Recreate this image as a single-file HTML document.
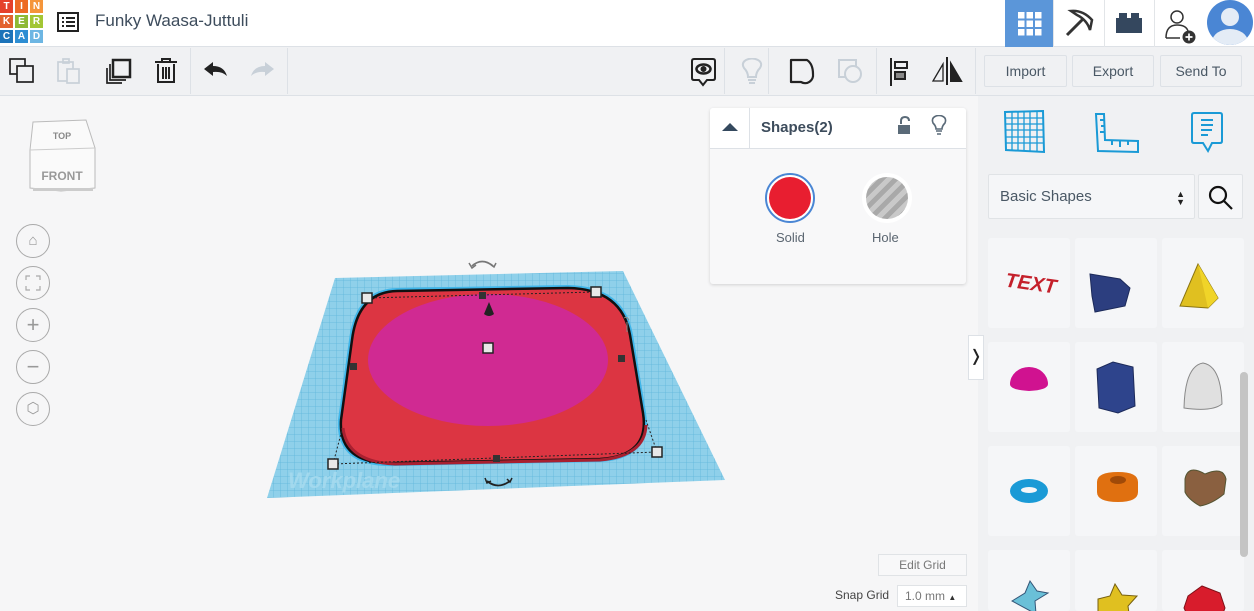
<!DOCTYPE html>
<html><head><meta charset="utf-8"><style>
*{box-sizing:border-box;margin:0;padding:0}
body{width:1254px;height:611px;overflow:hidden;background:#f6f6f7;font-family:"Liberation Sans",sans-serif;position:relative;color:#34495e}
.abs{position:absolute}
#top{left:0;top:0;width:1254px;height:47px;background:#fff;border-bottom:1px solid #dde1e6}
#tb{left:0;top:47px;width:1254px;height:49px;background:#f0f1f3;border-bottom:1px solid #dde1e6}
.logo div{position:absolute;width:13px;height:13px;color:#fff;font-size:10px;font-weight:bold;text-align:center;line-height:13px}
.btn{position:absolute;top:55px;height:32px;border:1px solid #dde1e6;border-radius:2px;background:#f0f1f3;font-size:14px;color:#4a5865;text-align:center;line-height:30px}
.sep{position:absolute;top:48px;width:1px;height:46px;background:#dde1e6}
.tile{position:absolute;width:82px;height:90px;background:#f5f6f8;border-radius:3px}
.nav{position:absolute;left:16px;width:34px;height:34px;border:1px solid #aaa;border-radius:50%;color:#999;text-align:center;line-height:31px;font-size:22px}
</style></head><body>
<div id="top" class="abs"></div>
<div class="abs logo" style="left:0;top:0;width:44px;height:44px">
<div style="left:0;top:0;background:#e5412b">T</div><div style="left:15px;top:0;background:#ed6b25">I</div><div style="left:30px;top:0;background:#f5953a">N</div>
<div style="left:0;top:15px;background:#e3632e">K</div><div style="left:15px;top:15px;background:#8fb935">E</div><div style="left:30px;top:15px;background:#a3c634">R</div>
<div style="left:0;top:30px;background:#1c73b9">C</div><div style="left:15px;top:30px;background:#2e8ed3">A</div><div style="left:30px;top:30px;background:#6db6e3">D</div>
</div>
<svg class="abs" style="left:57px;top:12px" width="22" height="20"><rect x="1" y="1" width="20" height="18" fill="none" stroke="#222" stroke-width="2"/><g fill="#222"><rect x="5" y="5" width="2" height="2"/><rect x="5" y="9" width="2" height="2"/><rect x="5" y="13" width="2" height="2"/><rect x="9" y="5" width="9" height="2"/><rect x="9" y="9" width="9" height="2"/><rect x="9" y="13" width="9" height="2"/></g></svg>
<div class="abs" style="left:95px;top:11px;font-size:17px;color:#3d4c5c">Funky Waasa-Juttuli</div>
<div class="abs" style="left:1005px;top:0;width:48px;height:47px;background:#5b96d9"></div>
<svg class="abs" style="left:1018px;top:12px" width="24" height="24" fill="#fff"><rect x="0" y="0" width="6.5" height="6.5"/><rect x="8.5" y="0" width="6.5" height="6.5"/><rect x="17" y="0" width="6.5" height="6.5"/><rect x="0" y="8.5" width="6.5" height="6.5"/><rect x="8.5" y="8.5" width="6.5" height="6.5"/><rect x="17" y="8.5" width="6.5" height="6.5"/><rect x="0" y="17" width="6.5" height="6.5"/><rect x="8.5" y="17" width="6.5" height="6.5"/><rect x="17" y="17" width="6.5" height="6.5"/></svg>
<div class="abs" style="left:1053px;top:0;width:1px;height:47px;background:#e2e5e8"></div>
<svg class="abs" style="left:1063px;top:8px" width="32" height="30"><path d="M4 27 L20 11" stroke="#333" stroke-width="3"/><path d="M8 3 Q20 2 29 12 L27 22 Q24 12 14 7Z" fill="none" stroke="#333" stroke-width="2.5"/></svg>
<div class="abs" style="left:1104px;top:0;width:1px;height:47px;background:#e2e5e8"></div>
<svg class="abs" style="left:1116px;top:13px" width="26" height="20" fill="#34475e"><rect x="0" y="5" width="26" height="15"/><rect x="3" y="0" width="8" height="6"/><rect x="15" y="0" width="8" height="6"/></svg>
<div class="abs" style="left:1154px;top:0;width:1px;height:47px;background:#e2e5e8"></div>
<svg class="abs" style="left:1164px;top:9px" width="38" height="36"><circle cx="13" cy="8" r="6" fill="none" stroke="#333" stroke-width="1.5"/><path d="M2 29 Q2 16 13 16 Q22 16 24 22" fill="none" stroke="#333" stroke-width="1.5"/><path d="M2 29 H16" stroke="#333" stroke-width="1.5"/><circle cx="25" cy="28" r="6.5" fill="#333"/><path d="M25 24.5 V31.5 M21.5 28 H28.5" stroke="#fff" stroke-width="1.7"/></svg>
<div class="abs" style="left:1207px;top:0;width:46px;height:45px;border-radius:50%;background:#4a86d4;overflow:hidden"><div class="abs" style="left:14px;top:8px;width:18px;height:18px;border-radius:50%;background:#e4ecf6"></div><div class="abs" style="left:5px;top:29px;width:36px;height:26px;border-radius:50%;background:#e4ecf6"></div></div>

<div id="tb" class="abs"></div>
<svg class="abs" style="left:9px;top:58px" width="26" height="26" fill="none" stroke="#222" stroke-width="1.7"><rect x="1" y="1" width="15" height="15"/><rect x="8" y="8" width="16" height="16" fill="#f0f1f3"/></svg>
<svg class="abs" style="left:56px;top:58px" width="26" height="26" fill="none" stroke="#c8d0d8" stroke-width="1.7"><rect x="2" y="4" width="15" height="19"/><rect x="7" y="1" width="6" height="4"/><rect x="11" y="11" width="12" height="14" fill="#f0f1f3"/></svg>
<svg class="abs" style="left:104px;top:58px" width="28" height="28" fill="none" stroke="#222" stroke-width="1.7"><rect x="9" y="2" width="17" height="17" stroke-width="2.5"/><path d="M6 6 V22 H22"/><path d="M3 10 V25 H18"/></svg>
<svg class="abs" style="left:154px;top:57px" width="24" height="28" fill="none" stroke="#222" stroke-width="2"><path d="M1 5 H23 M8 5 V2 H16 V5"/><path d="M4 7 V25 H20 V7"/><path d="M9 10 V22 M12 10 V22 M15 10 V22"/></svg>
<div class="sep" style="left:190px"></div>
<svg class="abs" style="left:204px;top:62px" width="24" height="16"><path d="M0 7 L9 0 V4 Q20 4 23 14 Q18 9 9 10 V14Z" fill="#222"/></svg>
<svg class="abs" style="left:251px;top:62px" width="24" height="16"><path d="M23 7 L14 0 V4 Q3 4 0 14 Q5 9 14 10 V14Z" fill="#c8d0d8"/></svg>
<div class="sep" style="left:287px"></div>
<svg class="abs" style="left:691px;top:58px" width="26" height="30" fill="none" stroke="#222" stroke-width="2"><path d="M3 1 H22 Q24 1 24 3 V20 Q24 22 22 22 H16 L12 27 L8 22 H3 Q1 22 1 20 V3 Q1 1 3 1Z"/><ellipse cx="12.5" cy="11" rx="7" ry="4.5" stroke-width="2.5"/><circle cx="12.5" cy="11" r="2" fill="#222"/></svg>
<div class="sep" style="left:724px"></div>
<svg class="abs" style="left:740px;top:58px" width="24" height="28" fill="none" stroke="#c8d0d8" stroke-width="2"><path d="M8 19 Q8 14 4 10 Q1 5 6 2 Q12 -1 18 2 Q23 5 20 10 Q16 14 16 19Z"/><path d="M8 22 H16 M9 25 H15"/></svg>
<div class="sep" style="left:768px"></div>
<svg class="abs" style="left:789px;top:58px" width="28" height="28" fill="none" stroke="#222" stroke-width="2.2"><path d="M2 2 H18 Q24 6 24 16 A8 8 0 0 1 12 24 L2 24Z" stroke-linejoin="round"/></svg>
<svg class="abs" style="left:837px;top:58px" width="28" height="28" fill="none" stroke="#c8d0d8" stroke-width="2"><rect x="2" y="2" width="17" height="17"/><circle cx="16" cy="16" r="8" fill="#f0f1f3"/></svg>
<div class="sep" style="left:876px"></div>
<svg class="abs" style="left:889px;top:57px" width="22" height="30" fill="none" stroke="#222" stroke-width="2"><path d="M2 1 V29"/><rect x="6" y="5" width="12" height="6"/><rect x="6" y="15" width="10" height="7" fill="#888" stroke="#222"/></svg>
<svg class="abs" style="left:930px;top:56px" width="34" height="30" fill="none" stroke="#222" stroke-width="2"><path d="M17 1 V29"/><path d="M13 8 L3 25 H13Z" stroke-width="1.3"/><path d="M21 8 L31 25 H21Z" fill="#222"/></svg>
<div class="sep" style="left:975px"></div>
<div class="btn" style="left:984px;width:83px">Import</div>
<div class="btn" style="left:1072px;width:82px">Export</div>
<div class="btn" style="left:1160px;width:82px">Send To</div>

<!-- right panel -->
<div class="abs" style="left:978px;top:96px;width:276px;height:515px;background:#f0f1f3"></div>
<svg class="abs" style="left:1002px;top:110px" width="44" height="44" fill="none" stroke="#1a9ad6" stroke-width="1.3"><path d="M3 2 L41 1 L42 42 L4 40Z" stroke-width="2"/><path d="M10 2 L10 40 M16 2 V40 M22 2 V41 M28 1 V41 M35 1 V41 M3 8 H41 M3 14 H41 M3 20 H41 M3 27 H41 M3 33 H42"/></svg>
<svg class="abs" style="left:1094px;top:112px" width="46" height="44" fill="none" stroke="#1a9ad6" stroke-width="2"><path d="M2 2 H10 L11 28 L44 29 L44 40 L4 39Z"/><path d="M10 8 H6 M10 14 H7 M10 20 H6 M18 29 V33 M26 29 V35 M34 29 V33"/></svg>
<svg class="abs" style="left:1190px;top:111px" width="34" height="44" fill="none" stroke="#1a9ad6" stroke-width="2"><path d="M4 2 H30 Q32 2 32 4 V30 Q32 32 30 32 H22 L18 40 L13 32 H4 Q2 32 2 30 V4 Q2 2 4 2Z"/><path d="M11 9 H23 M11 14 H23 M11 19 H22 M11 24 H18"/></svg>
<div class="abs" style="left:988px;top:174px;width:207px;height:45px;background:#f5f6f8;border:1px solid #e0e3e6;border-radius:2px;font-size:15px;color:#4a5865;line-height:43px;padding-left:11px">Basic Shapes<span style="position:absolute;right:9px;top:0;font-size:9px;line-height:8px;padding-top:15px;color:#222">▲<br>▼</span></div>
<div class="abs" style="left:1198px;top:174px;width:45px;height:45px;background:#f5f6f8;border:1px solid #e0e3e6;border-radius:2px"></div>
<svg class="abs" style="left:1207px;top:184px" width="28" height="28" fill="none" stroke="#111" stroke-width="2.2"><circle cx="11" cy="11" r="8"/><path d="M17 17 L25 25"/></svg>
<div class="tile" style="left:988px;top:238px"></div><div class="tile" style="left:1075px;top:238px"></div><div class="tile" style="left:1162px;top:238px"></div>
<div class="tile" style="left:988px;top:342px"></div><div class="tile" style="left:1075px;top:342px"></div><div class="tile" style="left:1162px;top:342px"></div>
<div class="tile" style="left:988px;top:446px"></div><div class="tile" style="left:1075px;top:446px"></div><div class="tile" style="left:1162px;top:446px"></div>
<div class="tile" style="left:988px;top:550px;height:61px"></div><div class="tile" style="left:1075px;top:550px;height:61px"></div><div class="tile" style="left:1162px;top:550px;height:61px"></div>
<div class="abs" style="left:1240px;top:372px;width:8px;height:185px;background:#c4c4c4;border-radius:4px"></div>
<svg class="abs" style="left:980px;top:236px" width="274" height="375">
<text x="25" y="54" font-family="Liberation Sans" font-weight="bold" font-style="italic" font-size="20" fill="#c4202b" transform="rotate(8 50 50)">TEXT</text>
<path d="M110 38 L140 43 L150 52 L145 70 L115 76 L112 60Z" fill="#2c3e7f" stroke="#1c2a5a"/>
<path d="M218 28 L238 62 L228 72 L200 70Z" fill="#e0c020" stroke="#8a7410"/><path d="M218 28 L228 72 L238 62Z" fill="#f0d428"/>
<g transform="translate(0,20)">
<path d="M30 128 A19 17 0 0 1 68 128 Q68 134 49 135 Q30 134 30 128Z" fill="#d01290"/>
<path d="M117 113 L133 106 L153 111 L155 150 L138 157 L119 152Z" fill="#2e448c" stroke="#1c2a5a"/>
<path d="M204 152 Q205 110 223 107 Q241 110 242 148 Q232 156 204 152Z" fill="#e0e0e0" stroke="#888"/>
</g>
<g transform="translate(0,18)">
<ellipse cx="49" cy="237" rx="19" ry="12" fill="#1a9ad6"/><ellipse cx="49" cy="236" rx="8" ry="3" fill="#f5f6f8"/>
<path d="M117 228 Q117 218 138 218 Q158 218 158 228 V238 Q158 248 138 248 Q117 248 117 238Z" fill="#e07010"/><ellipse cx="138" cy="226" rx="8" ry="4" fill="#a04a08"/>
<path d="M205 225 Q208 210 225 220 Q243 212 246 225 L244 240 Q232 250 220 252 Q208 245 205 238Z" fill="#8a6040" stroke="#553"/>
</g>
<g transform="translate(0,10)">
<path d="M32 355 L45 347 L50 335 L57 345 L68 347 L55 355 L56 368 Z" fill="#6ac0d8" stroke="#357"/>
<path d="M118 353 L130 350 L135 338 L142 349 L157 350 L148 360 L150 375 L118 375Z" fill="#e0c020" stroke="#776010"/>
<path d="M208 350 L222 340 L240 347 L245 362 L240 375 L210 375 L204 362Z" fill="#d81c2c" stroke="#801018"/>
</g>
</svg>

<!-- collapse tab -->
<div class="abs" style="left:968px;top:335px;width:16px;height:45px;background:#fff;border:1px solid #dde1e6;font-size:16px;line-height:42px;text-align:center;color:#222">❭</div>

<!-- view cube -->
<svg class="abs" style="left:26px;top:118px" width="72" height="75"><path d="M7 4 L60 2 L69 30 L69 70 L35 73 L4 70 L4 32Z" fill="#fafafa" stroke="#bbb"/><path d="M4 32 L69 30" stroke="#ccc"/><rect x="7" y="70" width="60" height="3" fill="#ccc"/><text x="36" y="21" text-anchor="middle" font-size="9" font-weight="bold" fill="#888">TOP</text><text x="36" y="62" text-anchor="middle" font-size="12" font-weight="bold" fill="#999">FRONT</text></svg>
<div class="nav" style="top:224px;font-size:15px">⌂</div>
<div class="nav" style="top:266px"><svg width="16" height="16" style="margin-top:8px" fill="none" stroke="#aaa" stroke-width="1.2"><path d="M1 5V1H5M11 1H15V5M15 11V15H11M5 15H1V11"/></svg></div>
<div class="nav" style="top:308px">+</div>
<div class="nav" style="top:350px">−</div>
<div class="nav" style="top:392px;font-size:15px">⬡</div>

<!-- workplane scene -->
<svg class="abs" style="left:0;top:0" width="970" height="611">
<defs><pattern id="g" width="7" height="7" patternUnits="userSpaceOnUse"><rect width="7" height="7" fill="#8fd0ea"/><path d="M0 0H7M0 0V7" stroke="#5fb7dc" stroke-width="0.8"/></pattern></defs>
<polygon points="335,278 623,271 725,480 267,498" fill="url(#g)"/>
<text x="288" y="488" font-size="22" font-weight="bold" font-style="italic" fill="#a8dcef" opacity="0.8">Workplane</text>
<path d="M397 291 L568 288 Q622 289 630 335 L643 413 Q650 456 600 459 L395 463 Q338 465 341 420 L352 340 Q358 292 397 291Z" fill="none" stroke="#3fb6ea" stroke-width="6"/>
<path d="M397 291 L568 288 Q622 289 630 335 L643 413 Q650 456 600 459 L395 463 Q338 465 341 420 L352 340 Q358 292 397 291Z" fill="#dc3542" stroke="#111" stroke-width="2.5"/>
<path d="M343 428 Q347 462 395 464 L600 460 Q645 456 646 425" fill="none" stroke="#a82030" stroke-width="3"/>
<ellipse cx="488" cy="360" rx="120" ry="66" fill="#d02a92"/>
<path d="M333 464 L657 452 M333 464 L342 430 M657 452 L646 420 M367 298 L595 292" stroke="#222" stroke-dasharray="2,2" fill="none"/>
<g fill="#e8e8e8" stroke="#222" stroke-width="1.5"><rect x="362" y="293" width="10" height="10"/><rect x="591" y="287" width="10" height="10"/><rect x="483" y="343" width="10" height="10"/><rect x="328" y="459" width="10" height="10"/><rect x="652" y="447" width="10" height="10"/></g>
<g fill="#333"><rect x="479" y="292" width="7" height="7"/><rect x="350" y="363" width="7" height="7"/><rect x="618" y="355" width="7" height="7"/><rect x="493" y="455" width="7" height="7"/></g>
<path d="M489 302 L484 314 Q489 318 494 314Z" fill="#222"/>
<path d="M472 266 Q482 257 493 266" fill="none" stroke="#777" stroke-width="1.8"/><path d="M469 263 L472 268 L476 265 M490 264 L494 267 L496 263" fill="none" stroke="#777" stroke-width="1.5"/>
<path d="M487 481 Q498 490 510 481" fill="none" stroke="#222" stroke-width="1.8"/><path d="M485 478 L487 483 L491 481 M507 479 L510 482 L512 478" fill="none" stroke="#222" stroke-width="1.5"/>
<path d="M624 318 Q627 316 629 320 M627 322 V332" stroke="#888" fill="none"/>
</svg>

<!-- inspector -->
<div class="abs" style="left:710px;top:108px;width:256px;height:176px;background:#f8f8f9;border-radius:3px;box-shadow:0 1px 3px rgba(0,0,0,.15)"></div>
<div class="abs" style="left:710px;top:108px;width:256px;height:41px;background:#fff;border-bottom:1px solid #dde1e6;border-radius:3px 3px 0 0"></div>
<div class="abs" style="left:749px;top:108px;width:1px;height:41px;background:#dde1e6"></div>
<svg class="abs" style="left:721px;top:121px" width="18" height="12"><path d="M1 10 L9 2 L17 10Z" fill="#34495e"/></svg>
<div class="abs" style="left:761px;top:119px;font-size:15px;font-weight:bold;color:#3d4c5c">Shapes(2)</div>
<svg class="abs" style="left:897px;top:116px" width="16" height="20"><path d="M4 8 V5 Q4 1 8 1 Q12 1 12 5" fill="none" stroke="#5a6a78" stroke-width="2"/><rect x="1" y="9" width="12" height="9" fill="#5a6a78"/></svg>
<svg class="abs" style="left:931px;top:115px" width="16" height="22"><path d="M5 14 Q5 11 2 8 Q0 3 5 1 Q8 0 11 1 Q16 3 14 8 Q11 11 11 14Z" fill="none" stroke="#5a6a78" stroke-width="1.6"/><path d="M5 16 H11 M6 19 H10" stroke="#5a6a78" stroke-width="1.6"/></svg>
<div class="abs" style="left:765px;top:173px;width:50px;height:50px;border-radius:50%;border:2px solid #4a86d4;background:#fff"></div>
<div class="abs" style="left:769px;top:177px;width:42px;height:42px;border-radius:50%;background:#e81e30"></div>
<div class="abs" style="left:862px;top:173px;width:50px;height:50px;border-radius:50%;background:#fff"></div>
<div class="abs" style="left:866px;top:177px;width:42px;height:42px;border-radius:50%;background:repeating-linear-gradient(135deg,#a9a9a9 0 5px,#c9c9c9 5px 10px)"></div>
<div class="abs" style="left:776px;top:230px;font-size:13px;color:#5a6570">Solid</div>
<div class="abs" style="left:872px;top:230px;font-size:13px;color:#5a6570">Hole</div>

<!-- grid controls -->
<div class="abs" style="left:878px;top:554px;width:89px;height:22px;border:1px solid #e0e3e6;background:#f8f8f9;font-size:12px;color:#777;text-align:center;line-height:20px">Edit Grid</div>
<div class="abs" style="left:835px;top:588px;font-size:12px;color:#444">Snap Grid</div>
<div class="abs" style="left:897px;top:585px;width:70px;height:22px;border:1px solid #e0e3e6;background:#fff;font-size:12px;color:#777;line-height:20px;padding-left:7px">1.0 mm <span style="font-size:8px;color:#333">▲</span></div>
</body></html>
